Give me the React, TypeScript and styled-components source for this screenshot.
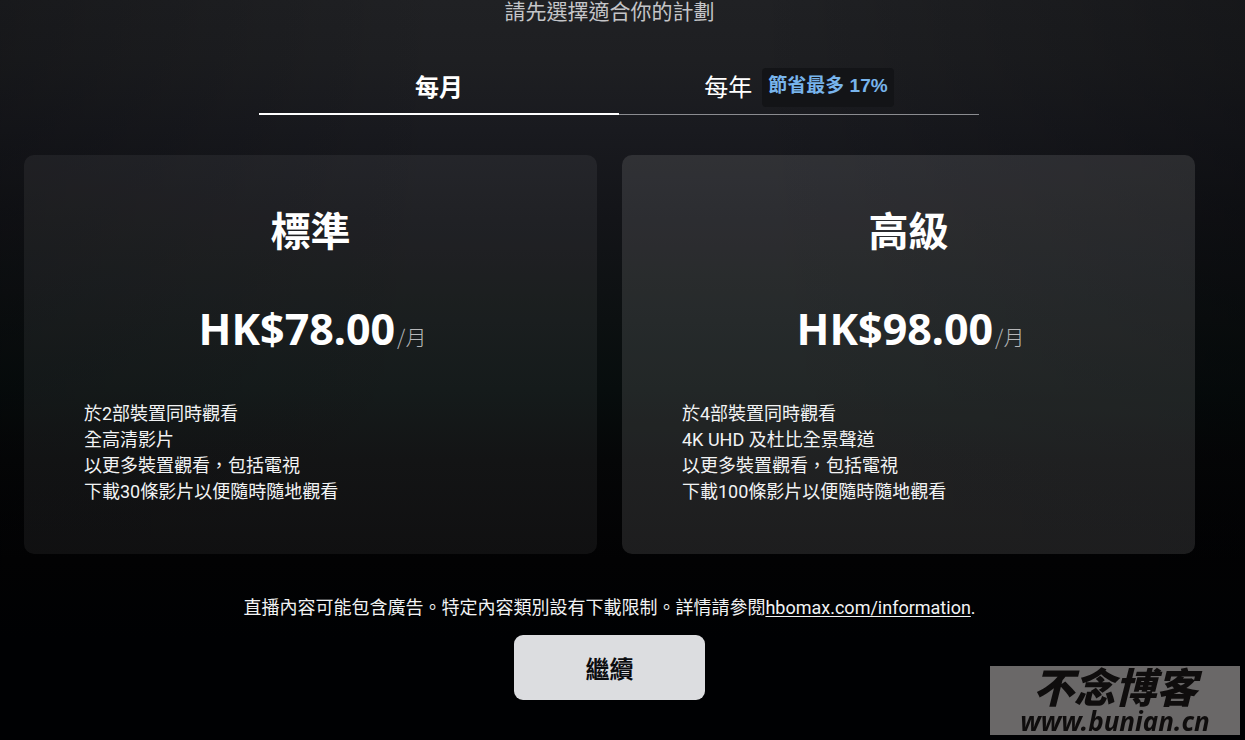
import React, { useState } from 'react';
import styled, { createGlobalStyle } from 'styled-components';

const GlobalStyle = createGlobalStyle`
  * { box-sizing: border-box; }
  html { min-height: 100%; background: #000103; }
  body {
    margin: 0;
    font-family: Roboto, 'Noto Sans CJK TC', sans-serif;
    color: #fff;
  }
`;

const Page = styled.main`
  min-height: 100vh;
  padding: 0 50px 40px 24px;
  display: flex;
  flex-direction: column;
  align-items: center;
  background:
    linear-gradient(90deg, rgba(0, 1, 3, 0.25) 0%, rgba(0, 1, 3, 0) 36%, rgba(0, 1, 3, 0) 60%, rgba(0, 1, 3, 0.3) 100%),
    linear-gradient(180deg, #202124 0, #1e1f22 60px, #191a1f 130px, #131418 220px, #0c1011 320px, #070d0d 390px, #050607 460px, #020203 560px, #000103 640px);
`;

const Subtitle = styled.p`
  margin: 0;
  font-size: 21px;
  line-height: 24px;
  color: #c4c5c8;
`;

const Tabs = styled.div`
  display: flex;
  width: 100%;
  max-width: 720px;
  margin: 36px 0 40px 19px;
`;

const Tab = styled.button<{ $active: boolean }>`
  flex: 1;
  height: 55px;
  padding: 0 0 4px;
  display: flex;
  align-items: center;
  justify-content: center;
  gap: 10px;
  border: 0;
  background: none;
  box-shadow: inset 0 ${p => (p.$active ? '-2px #fff' : '-1px #8b8c90')};
  color: #fff;
  font-family: inherit;
  font-size: 24px;
  font-weight: ${p => (p.$active ? 700 : 400)};
  cursor: pointer;
`;

const Saving = styled.span`
  height: 39px;
  margin-top: 4px;
  padding: 4px 6px 0;
  border-radius: 4px;
  background: #131417;
  color: #78b4ec;
  font-family: 'Liberation Sans', 'Noto Sans CJK TC', sans-serif;
  font-size: 19px;
  font-weight: 700;
  line-height: 28px;
`;

const Plans = styled.div`
  display: grid;
  grid-template-columns: 1fr 1fr;
  gap: 25px;
  width: 100%;
`;

const Plan = styled.article<{ $selected: boolean }>`
  min-height: 399px;
  padding: 48px 60px 32px;
  border-radius: 10px;
  background: rgba(255, 255, 255, ${p => (p.$selected ? 0.11 : 0.06)});
`;

const PlanName = styled.h2`
  margin: 0;
  font-size: 40px;
  line-height: 60px;
  text-align: center;
`;

const Price = styled.p`
  margin: 36px 0 42px;
  padding-left: 4px;
  font-family: 'Noto Sans', 'Noto Sans CJK TC', sans-serif;
  font-size: 43px;
  font-weight: 700;
  line-height: 60px;
  text-align: center;
`;

const Period = styled.span`
  margin-left: 2px;
  color: #b5b6b8;
  font-family: 'Noto Sans CJK TC', sans-serif;
  font-size: 21px;
  font-weight: 300;
  line-height: 1;
`;

const Features = styled.ul`
  margin: 0;
  padding: 0;
  list-style: none;
  font-size: 18px;
  line-height: 26px;
  color: #f2f3f4;
`;

const Note = styled.p`
  margin: 40px 0 14px;
  font-size: 18px;
  line-height: 27px;
  color: #f2f3f4;
  text-align: center;
`;

const InfoLink = styled.a`
  color: inherit;
  text-underline-offset: 2px;
`;

const Continue = styled.button`
  width: 191px;
  height: 65px;
  border: 0;
  border-radius: 9px;
  background: #dcdde0;
  color: #0b0c0f;
  font-family: inherit;
  font-size: 24px;
  font-weight: 700;
  cursor: pointer;
`;

const Watermark = styled.div`
  position: fixed;
  right: 5px;
  bottom: 5px;
  width: 250px;
  height: 69px;
  background: #6a6868;
  color: #0f0d0d;
  text-align: center;
  font-style: italic;
  white-space: nowrap;
`;

const WatermarkName = styled.div`
  font-family: 'Noto Sans CJK SC', sans-serif;
  font-size: 41px;
  font-weight: 900;
  line-height: 38px;
`;

const WatermarkSite = styled.div`
  font-family: 'Noto Sans', sans-serif;
  font-size: 26px;
  font-weight: 700;
  line-height: 34px;
`;

const plans = [
  { name: '標準', price: 'HK$78.00', features: ['於2部裝置同時觀看', '全高清影片', '以更多裝置觀看，包括電視', '下載30條影片以便隨時隨地觀看'] },
  { name: '高級', price: 'HK$98.00', features: ['於4部裝置同時觀看', '4K UHD 及杜比全景聲道', '以更多裝置觀看，包括電視', '下載100條影片以便隨時隨地觀看'] },
];

export default function App() {
  const [yearly, setYearly] = useState(false);
  return (
    <>
      <GlobalStyle />
      <Page lang="zh-Hant-HK">
        <Subtitle>請先選擇適合你的計劃</Subtitle>
        <Tabs role="tablist">
          <Tab role="tab" aria-selected={!yearly} $active={!yearly} onClick={() => setYearly(false)}>每月</Tab>
          <Tab role="tab" aria-selected={yearly} $active={yearly} onClick={() => setYearly(true)}>
            每年<Saving>節省最多 17%</Saving>
          </Tab>
        </Tabs>
        <Plans>
          {plans.map((plan, i) => (
            <Plan key={plan.name} $selected={i === 1}>
              <PlanName>{plan.name}</PlanName>
              <Price>{plan.price}<Period>/月</Period></Price>
              <Features>
                {plan.features.map(f => <li key={f}>{f}</li>)}
              </Features>
            </Plan>
          ))}
        </Plans>
        <Note>
          直播內容可能包含廣告。特定內容類別設有下載限制。詳情請參閱<InfoLink href="https://hbomax.com/information">hbomax.com/information</InfoLink>.
        </Note>
        <Continue>繼續</Continue>
      </Page>
      <Watermark>
        <WatermarkName lang="zh-Hans">不念博客</WatermarkName>
        <WatermarkSite>www.bunian.cn</WatermarkSite>
      </Watermark>
    </>
  );
}
